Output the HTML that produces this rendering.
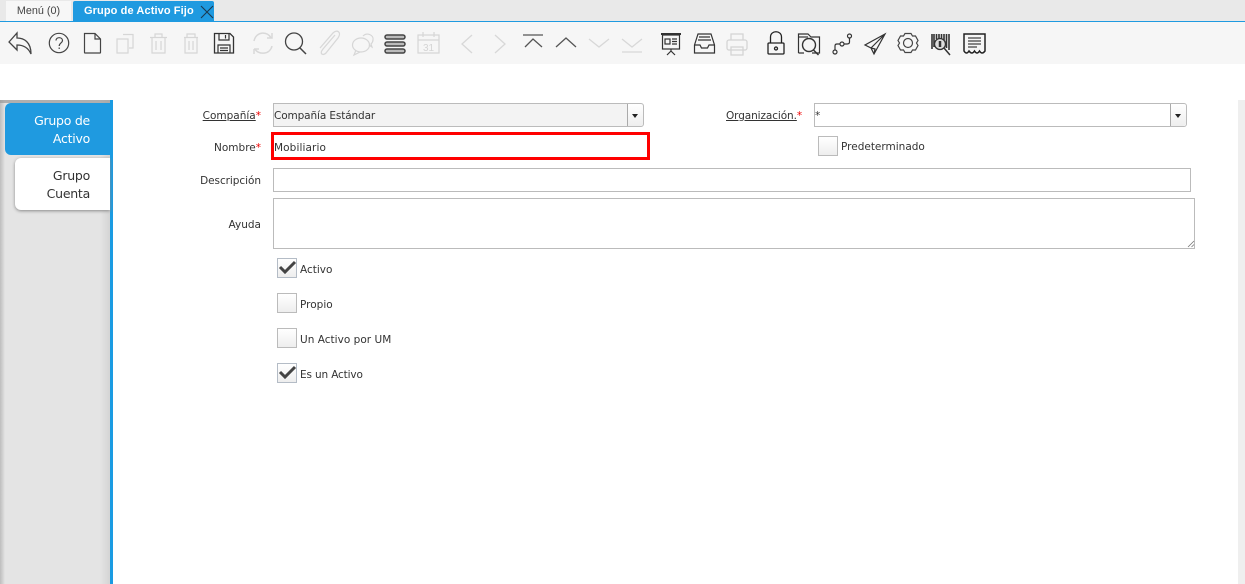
<!DOCTYPE html>
<html lang="es"><head><meta charset="utf-8"><title>Grupo de Activo Fijo</title>
<style>
html,body{margin:0;padding:0;background:#fff}
#p{position:relative;width:1245px;height:584px;overflow:hidden;background:#fff;font-family:"DejaVu Sans","Liberation Sans",sans-serif;font-size:10.5px;color:#333}
#p div,#p span.a{position:absolute;box-sizing:border-box}
.l{white-space:nowrap;text-align:right;color:#333;line-height:14px}
.l b{color:#e00;font-weight:normal}
.u{text-decoration:underline}
.f{border:1px solid #bbb;background:#fff;line-height:24px;padding-left:0;color:#333;white-space:nowrap;letter-spacing:-.12px}
.c{width:20px;height:20px;border:1px solid #bbb;background:linear-gradient(#fff,#eee);}
.t{white-space:nowrap;line-height:14px;color:#333}
.b{background:linear-gradient(#fff,#eee);border-left:1px solid #aaa}
.tri{width:0;height:0;border-left:3.5px solid transparent;border-right:3.5px solid transparent;border-top:4px solid #222}
</style></head><body><div id="p">
<div style="left:0;top:0;width:1245px;height:21px;background:#e9e9e9"></div>
<div style="left:6px;top:1px;width:65px;height:20px;background:#f7f7f7;font:10.8px/20px 'Liberation Sans',sans-serif;color:#444;text-align:center">Menú (0)</div>
<div style="left:73px;top:1px;width:141px;height:21px;background:#1f9ae0;border-radius:2px 2px 0 0;font:bold 11px/20px 'Liberation Sans',sans-serif;color:#fff;padding-left:11px;white-space:nowrap;letter-spacing:.1px">Grupo de Activo Fijo</div>
<svg style="position:absolute;left:200px;top:5px" width="14" height="14" fill="none" stroke="#1b3a50" stroke-width="1.1"><path d="M1 1L13 13M13 1L1 13"/></svg>
<div style="left:0;top:21px;width:1245px;height:1px;background:#1f9ae0"></div>
<div style="left:0;top:22px;width:1245px;height:42px;background:#f6f6f6"></div>

<svg style="position:absolute;left:0;top:22px" width="1000" height="42" fill="none" stroke="#444" stroke-width="1.2">
<!-- back -->
<path d="M9 20L17 11V16C24 16 31 20 31 32C28 25 23 23 17 23V28Z" stroke-width="1.3"/>
<!-- help -->
<circle cx="59" cy="21" r="9.7"/><path d="M56 18.500C56 14.500 62.500 15 62.500 18.500C62.500 21 59.200 21 59.200 24" /><path d="M59.200 25.500V27"/>
<!-- new -->
<path d="M84.500 11.500H95L100.500 17V30.500Q100.500 31 100 31H85Q84.500 31 84.500 30.500Z"/><path d="M95 11.500V17H100.500"/>
<!-- disabled copy, trash -->
<g stroke="#d6d6d6">
<path d="M123 12.500H133V26H129M117 17H128V31H117Z"/>
<path d="M150 15.500H167M155 15V12H162V15M152 16V31H165V16M156 19V28M161 19V28"/>
<path d="M184 15.500H198M187 15V12H195V15M185 16V31H197V16M189 19V28M193 19V28"/>
</g>
<!-- save -->
<path d="M214.500 11.500H230L233.500 15V31H214.500Z" stroke="#333" stroke-width="1.3"/><path d="M219 11.500V18H229V11.500M218 31V23H230V31M220 26H228M220 28.500H228" stroke="#333"/><path d="M225.500 13V16.500" stroke="#333"/>
<!-- refresh -->
<g stroke="#d8d8d8" stroke-width="1.5"><path d="M254 19C256 9 268 9 271 16M272 24C270 33 258 33 255 27"/><path d="M267 16H272V11M254 27V32M254 27H259"/></g>
<!-- find -->
<circle cx="294" cy="19.500" r="8.500" stroke="#444" stroke-width="1.300"/><path d="M300 26L306 32" stroke="#444" stroke-width="1.500"/>
<!-- attach -->
<path d="M335 14L323 28C319 33 323 35 326 32L338 17C342 11 337 8 333 12L320 27" stroke="#d8d8d8" stroke-width="1.3" transform="translate(0,-1)"/>
<!-- chat -->
<g stroke="#d6d6d6"><ellipse cx="361" cy="23" rx="8.500" ry="7"/><path d="M356 28L354 33L360 30"/><path d="M363 14C367 10 374 13 373 18C373 20 372 21 371 22L372 25L369 23"/></g>
<!-- grid -->
<g stroke="#444" stroke-width="1.500" fill="#bbb"><rect x="385" y="13" width="20" height="4" rx="2"/><rect x="385" y="20" width="20" height="4" rx="2"/><rect x="385" y="27" width="20" height="4" rx="2"/></g>
<!-- calendar -->
<g stroke="#d6d6d6"><rect x="418" y="13" width="21" height="18"/><path d="M418 18H439M423 10V15M434 10V15"/></g>
<text x="423" y="29" font-family="Liberation Sans" font-size="10" fill="#d4d4d4" stroke="none">31</text>
<!-- nav -->
<g stroke="#d8d8d8" stroke-width="1.300"><path d="M472 13L462 22L472 31M495 13L505 22L495 31"/></g>
<path d="M523 13H543M525 25L533 17L542 25" stroke="#555" stroke-width="1.300"/>
<path d="M556 25L566 16L576 25" stroke="#555" stroke-width="1.300"/>
<g stroke="#d8d8d8" stroke-width="1.300"><path d="M589 17L599 25L609 17M622 17L632 25L642 17M622 30H642"/></g>
<!-- report -->
<g stroke="#333"><path d="M661 12H681" stroke-width="2"/><rect x="662.500" y="13" width="17" height="14"/><rect x="665" y="17" width="5" height="5"/><path d="M672 17H677M672 19.500H677M672 22H677M671 27V29M671 29L667 33M671 29L675 33" /></g>
<!-- archive -->
<g stroke="#333"><path d="M694.500 23L698 12H711L714.500 23V31H694.500ZM694.500 23H700L701.500 26H707.500L709 23H714.500M699 15H710M698 18H711"/></g>
<!-- print -->
<g stroke="#d4d4d4" stroke-width="1.300"><rect x="727" y="18" width="20" height="10" rx="2"/><path d="M731 18V12H743V18M731 25H743V33H731Z"/></g>
<!-- lock -->
<g stroke="#222" stroke-width="1.300"><path d="M770.500 21V15C770.500 8 781.500 8 781.500 15V21"/><rect x="768" y="21" width="16" height="11" rx="1"/><circle cx="776" cy="26.500" r="1.500"/></g>
<!-- zoom folder -->
<g stroke="#333" stroke-width="1.200"><path d="M798.500 31V12H808L811 15H819.500V31H812M798.500 31H804"/><path d="M798.500 15H808"/><circle cx="809" cy="23" r="6.500" stroke-width="1.400"/><path d="M813.500 28L818.500 33" stroke-width="1.500"/></g>
<!-- workflow -->
<g stroke="#333"><circle cx="835" cy="30" r="2"/><circle cx="842" cy="22" r="2"/><circle cx="849.500" cy="14" r="2"/><path d="M835 28V24Q835 22 837 22H840M844 22H847Q849.500 22 849.500 20V16"/></g>
<!-- send -->
<g stroke="#333"><path d="M885 12L865 23L871 26L874 32L885 12ZM871 26L885 12M874 32L875 27L871 26"/></g>
<!-- gear -->
<g stroke="#444" stroke-width="1.200"><circle cx="908" cy="21" r="4.500"/><path d="M905 11.500H911L912.500 14L915.500 14L918 18.500L916.500 21L918 23.500L915.500 28L912.500 28L911 30.500H905L903.500 28L900.500 28L898 23.500L899.500 21L898 18.500L900.500 14L903.500 14Z"/></g>
<!-- barcode -->
<g stroke="#333"><path d="M932 12V27M934 12V25M936.500 12V17M939 12V17M941.500 12V17M944 12V18M946.500 12V26M949 12V28" stroke-width="1.600"/><circle cx="940" cy="22" r="5.500" fill="#ddd" stroke-width="1.300"/><path d="M940 19V25" stroke-width="2.500"/><path d="M944 26L950 33" stroke-width="1.500"/></g>
<!-- receipt -->
<g stroke="#222"><path d="M964 12H985V29Q982 33 979.500 29Q977 33 974.500 29Q972 33 969 29Q966.500 33 964 29Z" stroke-width="1.500"/><path d="M968 16H981M968 19H981M968 22H981M968 25H977" stroke="#444" stroke-width="1.300"/></g>
</svg>

<!-- sidebar -->
<div style="left:0;top:100px;width:110px;height:484px;background:linear-gradient(90deg,#bdbdbd 0,#e4e4e4 5px,#e4e4e4 100px,#d4d4d4 110px)"></div>
<div style="left:0;top:100px;width:110px;height:3px;background:#999;opacity:.7"></div>
<div style="left:110px;top:100px;width:3px;height:484px;background:#1a9be2"></div>
<div style="left:5px;top:103px;width:105px;height:52px;background:#1f9ae0;border-radius:6px 0 0 6px;color:#fff;font-size:12.500px;line-height:18px;text-align:right;padding:9px 20px 0 0;letter-spacing:-.25px">Grupo de<br>Activo</div>
<div style="left:15px;top:158px;width:95px;height:52px;background:#fff;border-radius:6px 0 0 6px;box-shadow:0 1px 3px #888;color:#333;font-size:12.500px;line-height:18px;text-align:right;padding:9px 20px 0 0;letter-spacing:-.25px">Grupo<br>Cuenta</div>

<!-- scrollbar -->
<div style="left:1238px;top:100px;width:7px;height:484px;background:#efefef"></div>

<!-- form -->
<div class="l" style="left:150px;width:111px;top:109px"><span class="u">Compañía</span><b>*</b></div>
<div class="f" style="left:273px;top:103px;width:371px;height:24px;background:#f3f3f3;border-radius:0 3px 3px 0">Compañía Estándar</div>
<div class="b" style="left:627px;top:104px;width:16px;height:22px;border-radius:0 3px 3px 0"></div>
<div class="tri" style="left:632px;top:114px"></div>

<div class="l" style="left:690px;width:112px;top:109px;letter-spacing:-.1px"><span class="u">Organización.</span><b>*</b></div>
<div class="f" style="left:814px;top:103px;width:373px;height:24px;border-radius:0 3px 3px 0">*</div>
<div class="b" style="left:1170px;top:104px;width:16px;height:22px;border-radius:0 3px 3px 0"></div>
<div class="tri" style="left:1175px;top:114px"></div>

<div class="l" style="left:150px;width:111px;top:141px">Nombre<b>*</b></div>
<div class="f" style="left:271px;top:132px;width:379px;height:28px;border:3px solid #f00;line-height:27px;padding-left:0;letter-spacing:.1px">Mobiliario</div>

<div class="c" style="left:818px;top:136px;width:20px"></div>
<div class="t" style="left:841px;top:140px">Predeterminado</div>

<div class="l" style="left:150px;width:111px;top:174px;letter-spacing:-.05px">Descripción</div>
<div class="f" style="left:273px;top:168px;width:918px;height:24px"></div>

<div class="l" style="left:150px;width:111px;top:218px">Ayuda</div>
<div class="f" style="left:273px;top:198px;width:922px;height:51px"></div>
<svg style="position:absolute;left:1187px;top:240px" width="8" height="8" fill="none" stroke="#777" stroke-width=".8"><path d="M1 7L7 1M4.500 7L7 4.500"/></svg>

<div class="c" style="left:277px;top:258px;border-color:#b4bcc6"></div>
<svg style="position:absolute;left:277px;top:258px" width="20" height="20" fill="none" stroke="#444" stroke-width="3"><path d="M3 9L8 14L18 4"/></svg>
<div class="t" style="left:300px;top:263px">Activo</div>

<div class="c" style="left:277px;top:293px"></div>
<div class="t" style="left:300px;top:298px">Propio</div>

<div class="c" style="left:277px;top:328px"></div>
<div class="t" style="left:300px;top:333px;letter-spacing:.02px">Un Activo por UM</div>

<div class="c" style="left:277px;top:363px;border-color:#b4bcc6"></div>
<svg style="position:absolute;left:277px;top:363px" width="20" height="20" fill="none" stroke="#444" stroke-width="3"><path d="M3 9L8 14L18 4"/></svg>
<div class="t" style="left:300px;top:368px;letter-spacing:-.15px">Es un Activo</div>
</div></body></html>
